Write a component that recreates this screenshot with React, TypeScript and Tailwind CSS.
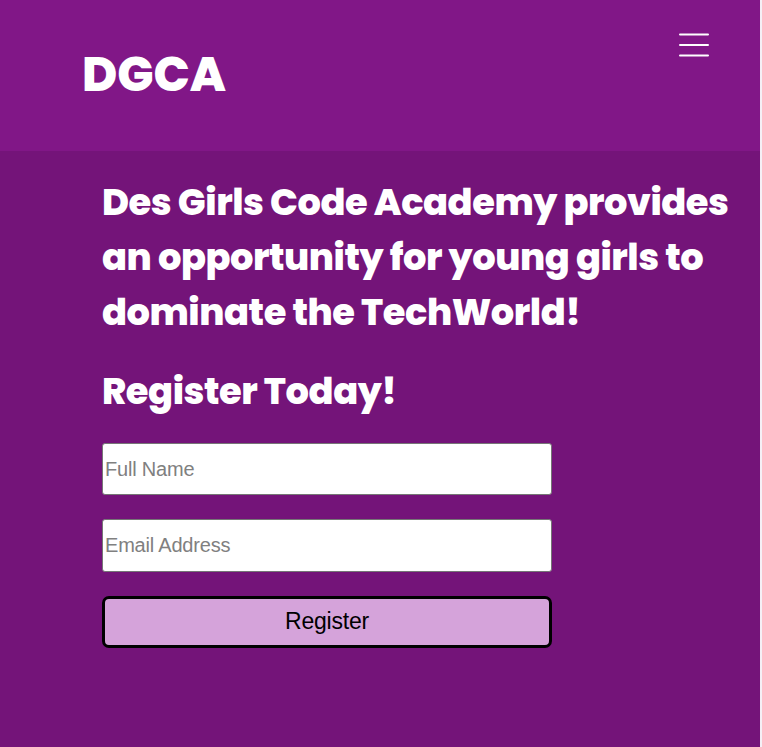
const heading =
  "font-['Poppins','Inter',sans-serif] font-extrabold text-white whitespace-nowrap";

export default function App() {
  return (
    <div className="h-[747px] w-[762px] overflow-hidden bg-[#f5f0f6] pr-[2px]">
      <div className="flex h-full flex-col bg-[#741479]">
        <header className="flex h-[151px] shrink-0 items-start justify-between bg-[#811787] pl-[82px] pr-[51px]">
          <h1 className={`${heading} mt-[39px] text-[48px] leading-[72px] tracking-[-0.1px]`}>DGCA</h1>
          <button aria-label="Menu" className="mt-[33px]">
            <svg width="30" height="24" viewBox="0 0 30 24" stroke="#fff" strokeWidth="2" strokeLinecap="round">
              <path d="M1 1.5h28M1 12h28M1 22.5h28" />
            </svg>
          </button>
        </header>
        <main className="pl-[102px] pt-[24px]">
          <h2 className={`${heading} text-[36.8px] leading-[55px] tracking-[-0.45px]`}>
            <span className="block">Des Girls Code Academy provides</span>
            <span className="block">an opportunity for young girls to</span>
            <span className="block">dominate the TechWorld!</span>
          </h2>
          <h2 className={`${heading} mt-[24px] text-[36.8px] leading-[55px] tracking-[-0.45px]`}>Register Today!</h2>
          <form className="mt-[24px] flex w-[450px] flex-col font-['Liberation_Sans',Arial,sans-serif]">
            <input
              placeholder="Full Name"
              className="h-[52px] rounded-[3px] border border-[#767676] bg-white px-[2px] text-[20px] tracking-[-0.2px] placeholder:text-[#808080]"
            />
            <input
              placeholder="Email Address"
              className="mt-[24px] h-[53px] rounded-[3px] border border-[#767676] bg-white px-[2px] text-[20px] tracking-[-0.2px] placeholder:text-[#808080]"
            />
            <button
              type="button"
              className="mt-[24px] h-[52px] rounded-[7px] border-[3px] border-black bg-[#d5a3da] pb-[2px] text-[23px] tracking-[-0.2px] text-black"
            >
              Register
            </button>
          </form>
        </main>
      </div>
    </div>
  );
}
